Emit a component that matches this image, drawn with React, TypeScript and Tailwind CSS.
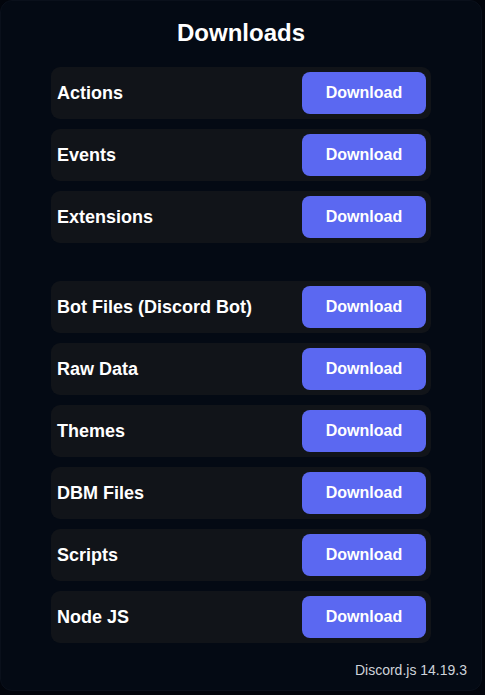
import React from "react";

const group1 = ["Actions", "Events", "Extensions"];
const group2 = ["Bot Files (Discord Bot)", "Raw Data", "Themes", "DBM Files", "Scripts", "Node JS"];

function Row({ label }: { label: string }) {
  return (
    <div className="flex h-[52px] items-center justify-between rounded-[9px] bg-[#111419] pl-[6px] pr-[5px]">
      <span className="text-[18px] font-bold text-white">{label}</span>
      <button className="h-[42px] w-[124px] rounded-[8px] bg-[#5b68f1] text-[16px] font-bold text-white">
        Download
      </button>
    </div>
  );
}

export default function App() {
  return (
    <div
      className="h-[695px] w-[485px] bg-[#02050c]"
      style={{ fontFamily: '"Liberation Sans", Arial, sans-serif' }}
    >
      <div className="flex h-[691px] w-[482px] flex-col rounded-[12px] border border-[#0a101b] bg-[#040a14] pt-[16px]">
        <h1 className="h-[32px] text-center text-[24px] font-bold leading-[32px] text-white">Downloads</h1>
        <div className="mx-auto mt-[18px] flex w-[380px] flex-col gap-[10px]">
          {group1.map((l) => (
            <Row key={l} label={l} />
          ))}
        </div>
        <div className="mx-auto mt-[38px] flex w-[380px] flex-col gap-[10px]">
          {group2.map((l) => (
            <Row key={l} label={l} />
          ))}
        </div>
        <div className="mt-[17px] pr-[14px] text-right text-[14px] leading-[20px] text-[#cfd3da]">
          Discord.js 14.19.3
        </div>
      </div>
    </div>
  );
}
